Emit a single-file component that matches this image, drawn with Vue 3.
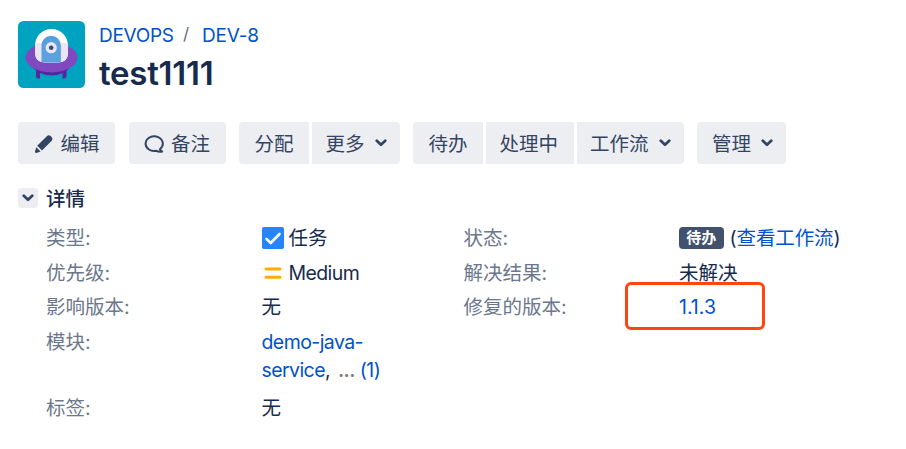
<script setup>
const groups = [
  [{ text: '编辑', icon: 'pencil', width: 97 }],
  [{ text: '备注', icon: 'comment', width: 97 }],
  [{ text: '分配', width: 70 }, { text: '更多', menu: true, width: 88 }],
  [{ text: '待办', width: 70 }, { text: '处理中', width: 88 }, { text: '工作流', menu: true, width: 107, wide: true }],
  [{ text: '管理', menu: true, width: 89 }],
]
</script>

<template>
  <main class="issue">
    <header class="head">
      <svg class="avatar" viewBox="0 0 67 67">
        <rect width="67" height="67" rx="5.5" fill="#00a3bf" />
        <path d="M18 48h4v9.500h-2.200q-1.800 0-1.800-2zM44.500 48h4v7.500q0 2-1.800 2h-2.200z" fill="#5427a0" />
        <path d="M12 43q8 11.500 21.500 11.500T55 43z" fill="#5427a0" />
        <ellipse cx="33.500" cy="36.500" rx="26" ry="15" fill="#8049c0" />
        <path d="M17 24.500a16.500 16.500 0 0 1 33 0V31q0 10.500-10.500 10.500h-12Q17 41.500 17 31z" fill="#fff" />
        <path d="M17.300 22h32.400l.3 2.500V31q0 10.500-10.500 10.500h-12Q17 41.500 17 31v-6.500z" fill="#eae5f6" />
        <path d="M23.500 24.500a9.700 9.700 0 0 1 19.400 0v17H23.500z" fill="#5ba1dd" />
        <path d="M23.500 24.500a9.700 9.700 0 0 1 2-6q3.200-3.600 7.700-3.600t7.700 3.600z" fill="#4c9ad8" opacity=".35" />
        <circle cx="33.200" cy="26.700" r="5.600" fill="#ebe6f6" />
        <circle cx="33.200" cy="26.700" r="2.300" fill="#344978" />
      </svg>
      <div class="titles">
        <nav class="crumbs">
          <a class="project">DEVOPS</a><span class="slash">/</span><a class="key">DEV-8</a>
        </nav>
        <h1>test1111</h1>
      </div>
    </header>

    <div class="toolbar">
      <div v-for="(group, i) in groups" :key="i" class="group">
        <button v-for="b in group" :key="b.text" :class="{ wide: b.wide, tight: b.menu || b.width === 88 }" :style="{ width: b.width + 'px' }">
          <svg v-if="b.icon === 'pencil'" class="icon" viewBox="0 0 20 20">
            <path d="M12.800 2.200q1.900-1.900 3.900-.1l.9.900q1.800 1.800.1 3.700L8 16.400 3.200 11.700z" fill="#344563" />
            <path d="M2.300 13.200l4.300 4.300-4.300 1.400q-1.500.3-1.300-1.300z" fill="#344563" />
          </svg>
          <svg v-if="b.icon === 'comment'" class="icon" viewBox="0 0 20 20">
            <path d="M15.900 15.200A8.600 7.400 0 1 0 12.400 16.800Q14.500 18.200 18.200 17.600 16.700 16.600 15.900 15.200Z" fill="none" stroke="#344563" stroke-width="2" stroke-linejoin="round" />
          </svg>
          <span class="label">{{ b.text }}</span>
          <svg v-if="b.menu" class="chevron" viewBox="0 0 12 8">
            <path d="M1.800 1.800 6 5.700l4.200-3.900" />
          </svg>
        </button>
      </div>
    </div>

    <section>
      <div class="section-title">
        <span class="toggle">
          <svg class="chevron" viewBox="0 0 12 8"><path d="M1.800 1.800 6 5.700l4.200-3.900" /></svg>
        </span>
        <h2>详情</h2>
      </div>
      <div class="details">
        <dl>
          <dt>类型:</dt>
          <dd class="with-icon">
            <svg class="task" viewBox="0 0 22 22">
              <rect width="22" height="22" rx="1.800" fill="#2684ff" />
              <path d="M4.500 11.800 8.700 16 17.500 7" fill="none" stroke="#fff" stroke-width="2.600" stroke-linecap="round" stroke-linejoin="round" />
            </svg>
            <span>任务</span>
          </dd>
          <dt>优先级:</dt>
          <dd class="with-icon">
            <svg class="task" viewBox="0 0 22 22">
              <path d="M4 6.900h14M4 15.300h14" stroke="#ffab00" stroke-width="3" stroke-linecap="round" />
            </svg>
            <span class="medium">Medium</span>
          </dd>
          <dt>影响版本:</dt>
          <dd>无</dd>
          <dt>模块:</dt>
          <dd class="modules"><a>demo-java-<br />service</a>, <span class="dots">...</span><a class="count">(1)</a></dd>
          <dt>标签:</dt>
          <dd>无</dd>
        </dl>
        <dl>
          <dt>状态:</dt>
          <dd class="status"><span class="lozenge">待办</span><span class="workflow">(<a>查看工作流</a>)</span></dd>
          <dt>解决结果:</dt>
          <dd>未解决</dd>
          <dt>修复的版本:</dt>
          <dd class="version"><a>1.1.3</a></dd>
        </dl>
      </div>
    </section>
  </main>
</template>

<style>
body {
  margin: 0;
  background: #fff;
}
</style>

<style scoped>
.issue {
  box-sizing: border-box;
  width: 906px;
  height: 449px;
  padding: 21px 18px 0;
  overflow: hidden;
  font: 19.5px/28px Inter, "Noto Sans CJK SC", sans-serif;
  color: #172b4d;
}
a {
  color: #0052cc;
}
.head {
  display: flex;
  gap: 14px;
  height: 101px;
}
.avatar {
  width: 67px;
  height: 67px;
}
.crumbs {
  display: flex;
  height: 27px;
  padding-top: 1px;
  font-size: 19px;
}
.project {
  width: 75px;
  letter-spacing: -0.3px;
}
.slash {
  width: 28px;
  padding-left: 9px;
  box-sizing: border-box;
  font-size: 17px;
  line-height: 25px;
  color: #5e6c84;
}
.key {
  letter-spacing: -0.2px;
}
h1 {
  margin: 6px 0 0;
  font-size: 33px;
  line-height: 36px;
  font-weight: 560;
  letter-spacing: -0.25px;
}
.toolbar {
  display: flex;
  gap: 13.5px;
  height: 42px;
}
.group {
  display: flex;
  gap: 2.500px;
}
.group:last-child {
  margin-left: -1px;
}
button {
  box-sizing: border-box;
  display: flex;
  align-items: center;
  height: 42px;
  padding: 0 0 0 15.5px;
  border: 0;
  background: #edeef2;
  font: inherit;
  color: #344563;
  white-space: nowrap;
}
button:first-child {
  border-radius: 4px 0 0 4px;
}
button:last-child {
  border-radius: 0 4px 4px 0;
}
button:only-child {
  border-radius: 4px;
}
.tight {
  padding-left: 14px;
}
.tight:only-child {
  padding-left: 15.5px;
}
.wide {
  margin-left: 1px;
  padding-left: 13px;
}
.label {
  padding-top: 2px;
}
.icon {
  width: 20px;
  height: 20px;
  margin: 2px 7px 0 0;
}
.chevron {
  width: 12px;
  height: 8px;
  fill: none;
  stroke: #344563;
  stroke-width: 2.800;
  stroke-linecap: round;
  stroke-linejoin: round;
}
button .chevron {
  margin: 0 0 1px 10px;
}
.section-title {
  display: flex;
  align-items: center;
  gap: 8px;
  height: 28px;
  padding-top: 20px;
}
.toggle {
  display: flex;
  align-items: center;
  justify-content: center;
  width: 20px;
  height: 20px;
  border-radius: 3px;
  background: #edeef2;
}
h2 {
  margin: 0;
  padding-top: 2px;
  font-size: 19.5px;
  font-weight: 500;
}
.details {
  display: grid;
  grid-template-columns: 417.5px 1fr;
  padding: 12px 0 0 28px;
}
dl {
  display: grid;
  grid-template-columns: 215.5px 1fr;
  align-content: start;
  row-gap: 6.500px;
  margin: 0;
}
dt {
  color: #6b778c;
}
dd {
  margin: 0;
  height: 28px;
  white-space: nowrap;
}
.with-icon {
  display: flex;
  align-items: center;
  gap: 5px;
}
.task {
  width: 22px;
  height: 22px;
}
.medium {
  letter-spacing: -0.6px;
}
.modules {
  height: 59.5px;
  letter-spacing: -0.58px;
}
.dots {
  margin-left: 3px;
  color: #7a7a7a;
  font-weight: 600;
}
.count {
  margin-left: 5px;
}
.status {
  display: flex;
  align-items: center;
  gap: 6px;
}
.workflow {
  letter-spacing: -0.1px;
}
.lozenge {
  width: 44.5px;
  height: 22px;
  border-radius: 4px;
  background: #42526e;
  color: #fff;
  font-size: 15px;
  font-weight: 700;
  line-height: 21px;
  text-align: center;
}
.version {
  position: relative;
}
.version::after {
  content: "";
  position: absolute;
  box-sizing: border-box;
  left: -54px;
  top: -11.5px;
  width: 140px;
  height: 48.5px;
  border: 3px solid #ff4611;
  border-radius: 6px;
}
</style>
